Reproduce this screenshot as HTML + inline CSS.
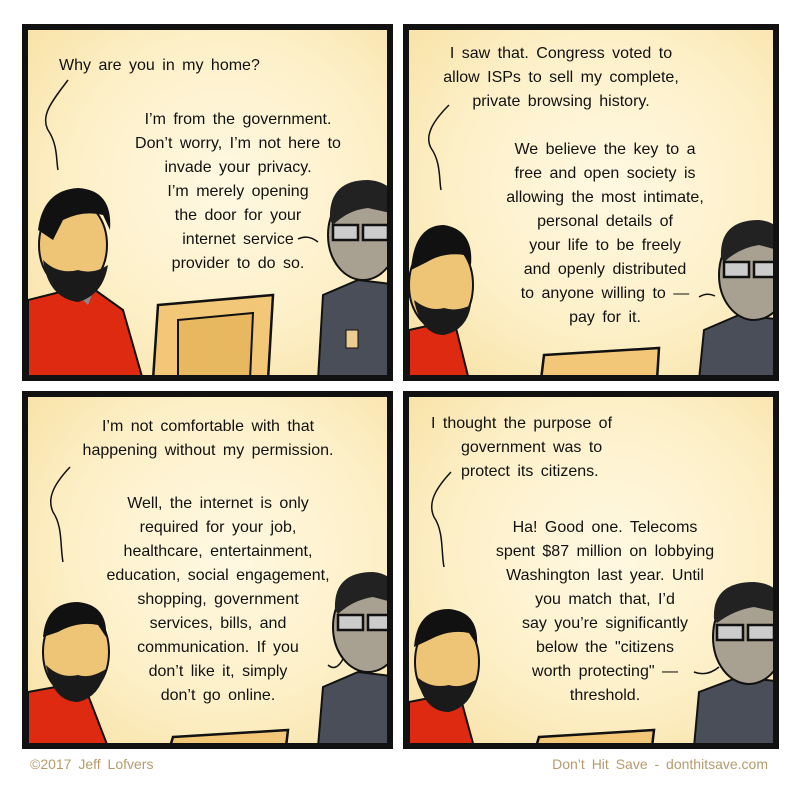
<!DOCTYPE html>
<html><head><meta charset="utf-8"><style>
body{margin:0;width:800px;height:800px;background:#fff;position:relative;overflow:hidden;font-family:"Liberation Sans",sans-serif}
.p{position:absolute;border:6px solid #111;box-sizing:border-box;overflow:hidden;background:radial-gradient(ellipse at 55% 45%,#fff8e2 0%,#fdf0c8 55%,#f7dfa0 100%)}
.t{position:absolute;font-size:16px;color:#111;white-space:nowrap;line-height:24px;word-spacing:3px}
.c{text-align:center;transform:translateX(-50%)}
.a{position:absolute}
.f{position:absolute;top:756px;font-size:14px;color:#b49c6c;word-spacing:3px}
</style></head><body>

<!-- Panel 1 -->
<div class="p" style="left:22px;top:24px;width:371px;height:357px">
<svg class="a" style="left:0;top:0" width="371" height="357">
<path d="M40 50 C25 70 12 85 20 100 C30 115 28 130 30 140" stroke="#111" stroke-width="1.5" fill="none"/>
<path d="M270 209 Q280 204 290 212" stroke="#111" stroke-width="1.5" fill="none"/>
<!-- red man -->
<path d="M0 270 L60 255 L95 280 L115 350 L0 350Z" fill="#dd2a10" stroke="#111" stroke-width="2"/>
<path d="M40 255 L60 275 L65 262Z" fill="#888"/>
<ellipse cx="45" cy="215" rx="34" ry="45" fill="#eec477" stroke="#111" stroke-width="2"/>
<path d="M10 200 Q15 160 50 158 Q85 160 82 200 L75 185 Q55 180 35 190 L25 210Z" fill="#111"/>
<path d="M15 230 Q20 268 50 272 Q75 265 80 235 Q65 245 50 240 Q30 245 15 230Z" fill="#1a1a1a"/>
<!-- monitor -->
<path d="M130 275 L245 265 L240 350 L125 350Z" fill="#f2c878" stroke="#111" stroke-width="2.5"/>
<path d="M150 290 L225 283 L222 350 L150 350Z" fill="#e8b860" stroke="#111" stroke-width="2"/>
<!-- suit man -->
<path d="M295 265 L330 250 L371 255 L371 350 L290 350Z" fill="#4a4e58" stroke="#111" stroke-width="2"/>
<ellipse cx="335" cy="205" rx="35" ry="45" fill="#a8a090" stroke="#111" stroke-width="2"/>
<path d="M302 190 Q300 150 340 150 Q371 152 371 185 L340 178 Q320 180 305 195Z" fill="#222"/>
<rect x="305" y="195" width="25" height="15" fill="#ccc" stroke="#111" stroke-width="2.5"/>
<rect x="335" y="195" width="25" height="15" fill="#ccc" stroke="#111" stroke-width="2.5"/>
<rect x="318" y="300" width="12" height="18" fill="#eccc90" stroke="#111"/>
</svg>
<div class="t" style="left:31px;top:24px">Why are you in my home?</div>
<div class="t c" style="left:210px;top:78px">I’m from the government.<br>Don’t worry, I’m not here to<br>invade your privacy.<br>I’m merely opening<br>the door for your<br>internet service<br>provider to do so.</div>
</div>

<!-- Panel 2 -->
<div class="p" style="left:403px;top:24px;width:376px;height:357px">
<svg class="a" style="left:0;top:0" width="376" height="357">
<path d="M40 75 C25 90 15 105 22 118 C32 132 30 150 32 160" stroke="#111" stroke-width="1.5" fill="none"/>
<path d="M290 267 Q298 262 306 266" stroke="#111" stroke-width="1.5" fill="none"/>
<path d="M0 300 L45 290 L60 350 L0 350Z" fill="#dd2a10" stroke="#111" stroke-width="2"/>
<ellipse cx="32" cy="255" rx="32" ry="45" fill="#eec477" stroke="#111" stroke-width="2"/>
<path d="M2 240 Q5 195 35 195 Q65 200 62 235 L55 225 Q35 222 18 232Z" fill="#111"/>
<path d="M5 270 Q12 305 35 305 Q58 300 62 275 Q48 282 35 278 Q20 282 5 270Z" fill="#1a1a1a"/>
<path d="M135 325 L250 318 L248 350 L132 350Z" fill="#f2c878" stroke="#111" stroke-width="2.5"/>
<path d="M295 300 L330 285 L376 290 L376 350 L290 350Z" fill="#4a4e58" stroke="#111" stroke-width="2"/>
<ellipse cx="345" cy="245" rx="35" ry="45" fill="#a8a090" stroke="#111" stroke-width="2"/>
<path d="M312 228 Q310 190 350 190 Q376 192 376 222 L350 215 Q330 218 315 232Z" fill="#222"/>
<rect x="315" y="232" width="25" height="15" fill="#ccc" stroke="#111" stroke-width="2.5"/>
<rect x="345" y="232" width="25" height="15" fill="#ccc" stroke="#111" stroke-width="2.5"/>
</svg>
<div class="t c" style="left:152px;top:12px">I saw that. Congress voted to<br>allow ISPs to sell my complete,<br>private browsing history.</div>
<div class="t c" style="left:196px;top:108px">We believe the key to a<br>free and open society is<br>allowing the most intimate,<br>personal details of<br>your life to be freely<br>and openly distributed<br>to anyone willing to —<br>pay for it.</div>
</div>

<!-- Panel 3 -->
<div class="p" style="left:22px;top:391px;width:371px;height:358px">
<svg class="a" style="left:0;top:0" width="371" height="358">
<path d="M42 70 C28 85 18 100 25 115 C35 130 32 150 35 165" stroke="#111" stroke-width="1.5" fill="none"/>
<path d="M300 268 Q308 275 315 262" stroke="#111" stroke-width="1.5" fill="none"/>
<path d="M0 295 L55 285 L80 350 L0 350Z" fill="#dd2a10" stroke="#111" stroke-width="2"/>
<ellipse cx="48" cy="255" rx="33" ry="45" fill="#eec477" stroke="#111" stroke-width="2"/>
<path d="M15 240 Q18 205 50 205 Q80 208 78 240 L70 228 Q50 224 30 235Z" fill="#111"/>
<path d="M18 268 Q25 305 50 305 Q72 300 78 272 Q62 282 50 278 Q32 282 18 268Z" fill="#1a1a1a"/>
<path d="M145 340 L260 333 L258 350 L142 350Z" fill="#f2c878" stroke="#111" stroke-width="2.5"/>
<path d="M295 290 L330 275 L371 280 L371 350 L290 350Z" fill="#4a4e58" stroke="#111" stroke-width="2"/>
<ellipse cx="340" cy="230" rx="35" ry="45" fill="#a8a090" stroke="#111" stroke-width="2"/>
<path d="M307 213 Q305 175 345 175 Q371 177 371 207 L345 200 Q325 203 310 217Z" fill="#222"/>
<rect x="310" y="218" width="25" height="15" fill="#ccc" stroke="#111" stroke-width="2.5"/>
<rect x="340" y="218" width="25" height="15" fill="#ccc" stroke="#111" stroke-width="2.5"/>
</svg>
<div class="t c" style="left:180px;top:18px">I’m not comfortable with that<br>happening without my permission.</div>
<div class="t c" style="left:190px;top:95px">Well, the internet is only<br>required for your job,<br>healthcare, entertainment,<br>education, social engagement,<br>shopping, government<br>services, bills, and<br>communication. If you<br>don’t like it, simply<br>don’t go online.</div>
</div>

<!-- Panel 4 -->
<div class="p" style="left:403px;top:391px;width:376px;height:358px">
<svg class="a" style="left:0;top:0" width="376" height="358">
<path d="M42 75 C28 90 18 105 25 120 C35 135 32 155 35 170" stroke="#111" stroke-width="1.5" fill="none"/>
<path d="M285 275 Q298 280 310 270" stroke="#111" stroke-width="1.5" fill="none"/>
<path d="M0 305 L50 295 L65 350 L0 350Z" fill="#dd2a10" stroke="#111" stroke-width="2"/>
<ellipse cx="38" cy="265" rx="32" ry="45" fill="#eec477" stroke="#111" stroke-width="2"/>
<path d="M5 250 Q8 212 40 212 Q70 215 68 248 L60 236 Q40 232 20 243Z" fill="#111"/>
<path d="M8 280 Q15 315 40 315 Q62 310 68 282 Q52 292 40 288 Q22 292 8 280Z" fill="#1a1a1a"/>
<path d="M130 340 L245 333 L243 350 L127 350Z" fill="#f2c878" stroke="#111" stroke-width="2.5"/>
<path d="M290 295 L330 280 L376 285 L376 350 L285 350Z" fill="#4a4e58" stroke="#111" stroke-width="2"/>
<ellipse cx="340" cy="240" rx="36" ry="47" fill="#a8a090" stroke="#111" stroke-width="2"/>
<path d="M305 222 Q303 185 345 185 Q376 187 376 217 L345 210 Q325 213 308 226Z" fill="#222"/>
<rect x="308" y="228" width="26" height="15" fill="#ccc" stroke="#111" stroke-width="2.5"/>
<rect x="339" y="228" width="26" height="15" fill="#ccc" stroke="#111" stroke-width="2.5"/>
</svg>
<div class="t" style="left:22px;top:15px">I thought the purpose of</div>
<div class="t" style="left:52px;top:39px">government was to</div>
<div class="t" style="left:52px;top:63px">protect its citizens.</div>
<div class="t c" style="left:196px;top:119px">Ha! Good one. Telecoms<br>spent $87 million on lobbying<br>Washington last year. Until<br>you match that, I’d<br>say you’re significantly<br>below the "citizens<br>worth protecting" —<br>threshold.</div>
</div>

<div class="f" style="left:30px">©2017 Jeff Lofvers</div>
<div class="f" style="right:32px">Don’t Hit Save - donthitsave.com</div>
</body></html>
